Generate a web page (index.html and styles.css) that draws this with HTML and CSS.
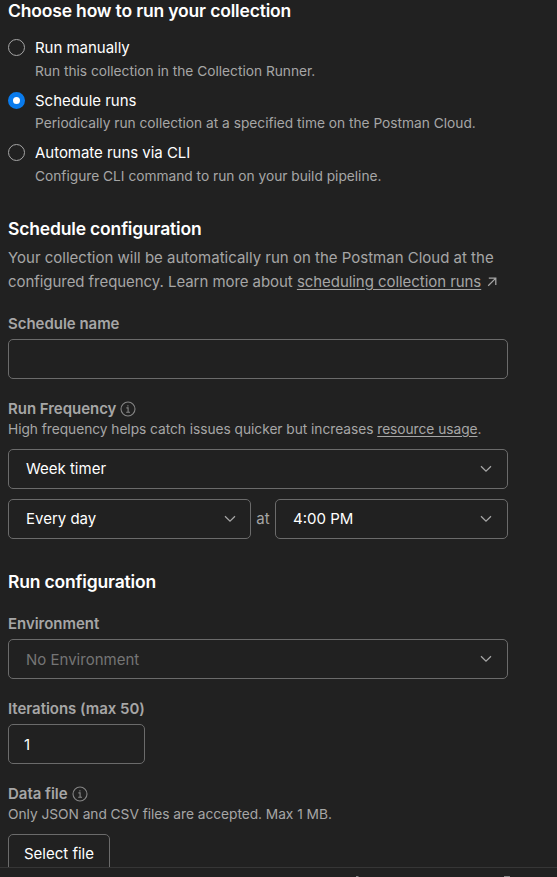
FILE: index.html
```html
<!DOCTYPE html>
<html lang="en">
<head>
<meta charset="utf-8">
<title>Run collection</title>
<link rel="stylesheet" href="styles.css">
</head>
<body>
<svg class="defs" width="0" height="0" aria-hidden="true">
  <symbol id="chevron" viewBox="0 0 12 8"><path d="M1 1.2 6 6.2 11 1.2"/></symbol>
  <symbol id="info" viewBox="0 0 16 16"><circle cx="8" cy="8" r="7"/><path d="M6.4 6.9H8.1V11.2M6.2 11.3H10M7.9 4.3V5.5"/></symbol>
</svg>
<div class="app">
  <main class="content">
    <section>
      <h2 class="title">Choose how to run your collection</h2>
      <div class="options">
        <div class="option"><span class="radio"></span><div><div class="option-name">Run manually</div><div class="hint">Run this collection in the Collection Runner.</div></div></div>
        <div class="option"><span class="radio checked"></span><div><div class="option-name">Schedule runs</div><div class="hint">Periodically run collection at a specified time on the Postman Cloud.</div></div></div>
        <div class="option"><span class="radio"></span><div><div class="option-name">Automate runs via CLI</div><div class="hint">Configure CLI command to run on your build pipeline.</div></div></div>
      </div>
    </section>
    <section class="schedule">
      <h2 class="title">Schedule configuration</h2>
      <p class="intro">Your collection will be automatically run on the Postman Cloud at the<br><span class="learn-more">configured frequency. Learn more about <span class="link">scheduling collection runs</span></span><svg class="external" viewBox="0 0 10 10"><path d="M1.2 8.8 8.6 1.4M1.8 1.2H8.8V8"/></svg></p>
      <div class="label">Schedule name</div>
      <div class="field"></div>
      <div class="label frequency">Run Frequency <svg class="info"><use href="#info"/></svg></div>
      <div class="hint frequency-hint">High frequency helps catch issues quicker but increases <span class="link">resource usage</span>.</div>
      <div class="field select frequency-select"><span>Week timer</span><svg class="chevron"><use href="#chevron"/></svg></div>
      <div class="timing">
        <div class="field select day"><span>Every day</span><svg class="chevron"><use href="#chevron"/></svg></div>
        <span class="at">at</span>
        <div class="field select time"><span>4:00 PM</span><svg class="chevron"><use href="#chevron"/></svg></div>
      </div>
    </section>
    <section class="run">
      <h2 class="title">Run configuration</h2>
      <div class="label environment">Environment</div>
      <div class="field select placeholder"><span>No Environment</span><svg class="chevron"><use href="#chevron"/></svg></div>
      <div class="label frequency">Iterations (max 50)</div>
      <div class="field iterations">1</div>
      <div class="label frequency">Data file <svg class="info"><use href="#info"/></svg></div>
      <div class="hint file-hint">Only JSON and CSV files are accepted. Max 1 MB.</div>
      <div class="field file-button">Select file</div>
    </section>
  </main>
  <footer class="statusbar">
    <svg class="status-icons" viewBox="0 0 557 9"><path d="M356 8.5H358.500M504 8.5H510"/></svg>
  </footer>
</div>
</body>
</html>
```

FILE: styles.css
```css
* { box-sizing: border-box; }
body { margin: 0; background: #212121; color: #a6a6a6; font-family: Inter, "Liberation Sans", sans-serif; font-size: 15px; }
.defs { position: absolute; }
.app { display: flex; flex-direction: column; height: 877px; overflow: hidden; }
.content { flex: 0 0 867px; width: 516px; padding: 0 8px; overflow: hidden; }
.title { margin: 0; font-size: 17.5px; line-height: 24px; font-weight: 600; letter-spacing: -0.17px; color: #fff; white-space: nowrap; }
.content > section:first-child { margin-top: -1px; }
.options { margin-top: 14px; }
.option { display: flex; gap: 10px; height: 52.5px; }
.radio { flex: none; width: 17px; height: 17px; margin-top: 2px; border: 1px solid #a6a6a6; border-radius: 50%; }
.checked { border: 5px solid #097bed; background: #fff; }
.option-name { color: #fff; line-height: 22px; letter-spacing: -0.03px; }
.hint { font-size: 13.75px; line-height: 20px; letter-spacing: -0.015px; white-space: nowrap; }
.option .hint { margin-top: 1.75px; }
.schedule { margin-top: 22px; }
.intro { margin: 5px 0 20px; line-height: 24px; white-space: nowrap; }
.learn-more { letter-spacing: -0.055px; }
.frequency-hint, .file-hint { letter-spacing: -0.04px; }
.link { text-decoration: underline; text-decoration-thickness: 1px; text-underline-offset: 2px; }
.external { width: 10px; height: 10px; margin-left: 6px; fill: none; stroke: #a6a6a6; stroke-width: 1.25; }
.label { display: flex; align-items: center; gap: 4px; height: 20px; margin-bottom: 5px; font-weight: 600; letter-spacing: -0.03px; white-space: nowrap; }
.field { height: 40px; border: 1px solid #6b6b6b; border-radius: 5px; color: #fff; }
.frequency { margin-top: 20px; margin-bottom: 5px; }
.label:has(.info) { margin-bottom: 0; }
.info { width: 16px; height: 16px; fill: none; stroke: #858585; stroke-width: 1.1; }
.select { display: flex; align-items: center; justify-content: space-between; padding: 0 15px 0 17px; }
.chevron { width: 12px; height: 8px; fill: none; stroke: #a6a6a6; stroke-width: 1.25; }
.frequency-select, .file-button { margin-top: 10px; }
.timing { display: flex; align-items: center; margin-top: 10px; }
.day { width: 243px; padding-right: 14px; }
.at { width: 24px; text-align: center; }
.time { flex: 1; }
.run { margin-top: 31px; }
.environment { margin-top: 20px; }
.placeholder { color: #757575; }
.placeholder span { padding-top: 2px; }
.iterations { width: 137px; padding-left: 15px; line-height: 40px; }
.file-button { width: 102px; text-align: center; line-height: 38px; }
.statusbar { height: 10px; border-top: 1px solid #363636; }
.status-icons { display: block; width: 557px; height: 9px; fill: none; stroke: #858585; stroke-width: 1; }
```
